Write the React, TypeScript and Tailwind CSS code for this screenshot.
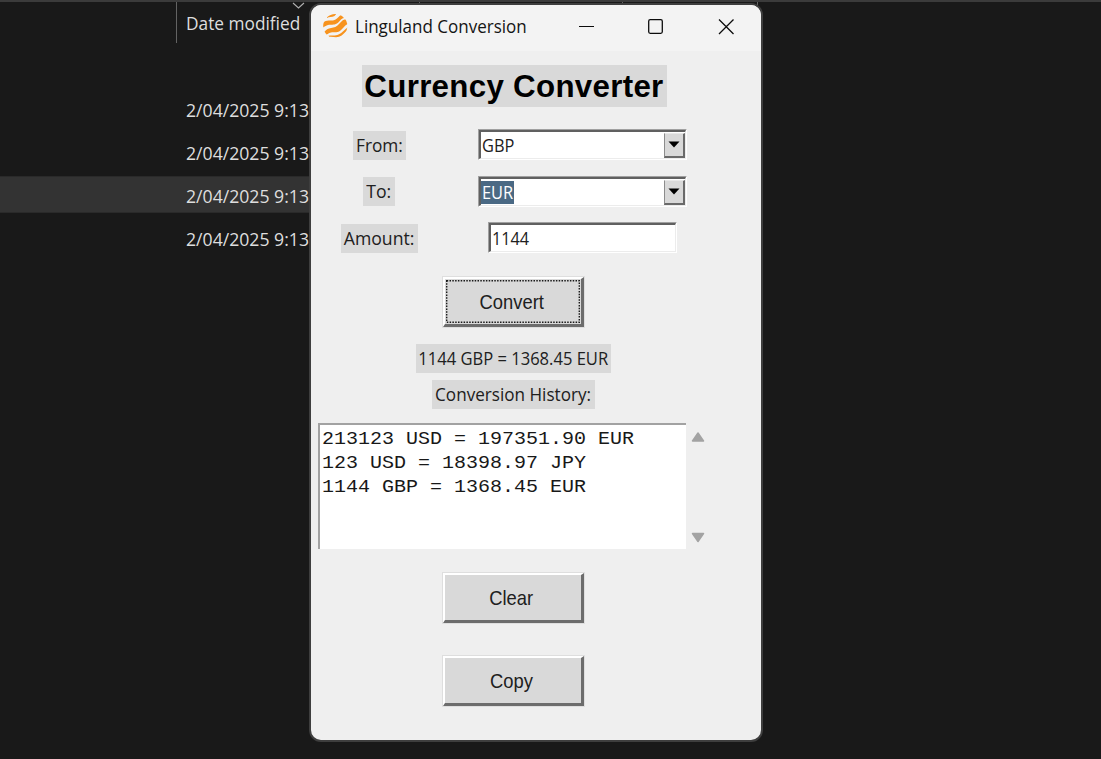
import type { ReactNode } from "react";

const rows = [
  { date: "2/04/2025 9:13", selected: false },
  { date: "2/04/2025 9:13", selected: false },
  { date: "2/04/2025 9:13", selected: true },
  { date: "2/04/2025 9:13", selected: false },
];

const history = ["213123 USD = 197351.90 EUR", "123 USD = 18398.97 JPY", "1144 GBP = 1368.45 EUR"];

function Explorer() {
  return (
    <div className="h-full w-full border-t-2 border-[#3b3b3b] font-['Open_Sans',sans-serif] text-[18px] text-[#dedede]">
      <div className="flex h-[41px]">
        <div className="w-[177px] border-r border-[#636363]" />
        <div className="relative w-[242px] pl-[9px]">
          <span className="inline-block origin-left scale-x-[0.96] whitespace-nowrap leading-[43px]">Date modified</span>
          <svg className="absolute left-[115px] top-0 h-[8px] w-[13px]" viewBox="0 0 13 8" fill="none" stroke="#b0b0b0" strokeWidth="1.1">
            <path d="M1 1L6.5 6L12 1" />
          </svg>
        </div>
        <div className="w-[203px] border-l border-[#636363]" />
        <div className="w-[136px] border-x border-[#636363]" />
      </div>
      <div className="h-[47px]" />
      {rows.map((row, i) => (
        <div key={i} className={`mb-[6px] flex h-[37px] w-[320px] items-center border-y pl-[186px] pt-[2px] ${row.selected ? "border-[#2a2a2a] bg-[#333333]" : "border-transparent"}`}>
          <span className="inline-block origin-left scale-x-[0.98] whitespace-nowrap leading-none">{row.date}</span>
        </div>
      ))}
    </div>
  );
}

function Logo() {
  return (
    <svg className="h-[25px] w-[25px]" viewBox="0 0 25 25">
      <defs>
        <clipPath id="globe">
          <circle cx="12.3" cy="12.1" r="12.1" />
        </clipPath>
      </defs>
      <g clipPath="url(#globe)" fill="#f7931e">
        <path d="M4 4C6 2.600 9 3.600 11.500 2C12.500 1.200 13 0 14 -1H4Z" />
        <path d="M-1 13V9.500C1 7.500 3.500 6.200 6.500 6.500C10 6.900 12 6.200 14.500 4C16 2.600 17 1.200 18.500 0.800L21 4C18.500 4 17.500 6.500 15 8.700C12 11.300 9 10.300 6 10.700C3.500 11 1.500 12.800 0 13.500Z" />
        <path d="M0 18.800C2 17.500 3.200 15.400 6 14.500C9 13.600 11.500 14.200 14.500 11.600C17.500 9 19 6.200 21.500 5.600H25V10C22.500 10.500 20.500 14 17.500 16.600C14.500 19.200 11 18 8 18.500C5.500 19 4.500 20.300 2.500 21Z" />
        <path d="M5.500 21.800C8.500 20.800 12 22.200 15.500 20.500C19.500 18.500 21.500 15.500 25 13.200V15.500C22 18 20 21.300 16 22.800C12.500 24 9.500 22.400 6 23Z" />
      </g>
    </svg>
  );
}

function TitleBar() {
  return (
    <div className="flex h-[46px] items-start bg-[#f3f3f3] pl-[12px] pt-[9px]">
      <Logo />
      <span className="ml-[7px] w-[215px] origin-left scale-x-[0.945] whitespace-nowrap font-['Open_Sans',sans-serif] text-[18px] leading-[25px] text-[#151515]">
        Linguland Conversion
      </span>
      <svg className="ml-[7px] mt-[3px] h-[20px] w-[160px]" viewBox="0 0 160 20" fill="none" stroke="#0c0c0c" strokeWidth="1.3">
        <path d="M2 9.5H17" strokeWidth="1" />
        <rect x="71.7" y="2.7" width="13.6" height="13.6" rx="1.5" />
        <path d="M142 2.5L156.500 17M156.500 2.500L142 17" />
      </svg>
    </div>
  );
}

function Tag({ className, textClass, children }: { className: string; textClass: string; children: ReactNode }) {
  return (
    <div className={`flex h-[29px] items-center justify-center bg-[#d9d9d9] pb-[2px] font-['Open_Sans',sans-serif] text-[18px] text-[#202020] ${className}`}>
      <span className={`inline-block whitespace-nowrap leading-none ${textClass}`}>{children}</span>
    </div>
  );
}

function Sunken({ className, children }: { className: string; children: ReactNode }) {
  return (
    <div className={`border border-b-white border-l-[#a0a0a0] border-r-white border-t-[#a0a0a0] ${className}`}>
      <div className="flex h-full w-full items-center border-b border-l-2 border-r border-t-2 border-b-[#ececec] border-l-[#606060] border-r-[#ececec] border-t-[#606060] bg-white font-['Open_Sans',sans-serif] text-[18px] leading-none text-[#202020]">
        {children}
      </div>
    </div>
  );
}

function Combo({ value, selected = false }: { value: string; selected?: boolean }) {
  return (
    <Sunken className="h-[31px] w-[209px]">
      <span className={`flex h-[23px] w-[33px] items-center pb-px ${selected ? "bg-[#4a6984] text-white" : ""}`}>
        <span className="origin-left translate-x-px scale-x-[0.91]">{value}</span>
      </span>
      <span className="ml-auto flex h-[25px] w-[21px] items-center justify-center border border-b-2 border-r-2 border-b-[#6a6a6a] border-l-[#8c8c8c] border-r-[#6a6a6a] border-t-[#e8e8e8] bg-[#d9d9d9]">
        <svg className="h-[7px] w-[12px]" viewBox="0 0 12 7">
          <path d="M0.500 0.500H11.500L6 6.500Z" fill="#000" />
        </svg>
      </span>
    </Sunken>
  );
}

function TkButton({ label, focused = false }: { label: string; focused?: boolean }) {
  return (
    <button className="block h-[52px] w-[143px] border border-[#dedede]">
      <span className="block h-full w-full border-b-[3px] border-l-2 border-r-[3px] border-t-2 border-b-[#6c6c6c] border-l-white border-r-[#6c6c6c] border-t-white bg-[#d9d9d9] p-px">
        <span className="relative flex h-full w-full items-center justify-center pr-[3px]">
          {focused && (
            <svg className="absolute inset-0 h-full w-full" fill="none" stroke="#1a1a1a" strokeWidth="1.4" strokeDasharray="1.500 1.300">
              <rect x="0.700" y="0.700" width="132.600" height="41.600" />
            </svg>
          )}
          <span className="inline-block scale-x-[0.875] whitespace-nowrap font-['Liberation_Sans',sans-serif] text-[21px] leading-none text-[#202020]">{label}</span>
        </span>
      </span>
    </button>
  );
}

function Converter() {
  return (
    <div className="absolute left-[309px] top-[3px] h-[739px] w-[454px] overflow-hidden rounded-[12px] border-2 border-[#3e3e3e] bg-[#efefef]">
      <TitleBar />
      <div className="flex flex-col pt-[14px]">
        <div className="ml-[51px] flex h-[42px] w-[305px] items-center justify-center bg-[#d9d9d9] pb-px pr-px">
          <h1 className="scale-x-[0.978] whitespace-nowrap font-['Liberation_Sans',sans-serif] text-[32px] font-bold leading-none tracking-[0.3px] text-black">Currency Converter</h1>
        </div>
        <div className="mt-[22px] flex h-[32px] items-start">
          <Tag className="ml-[42px] mt-[2px] w-[53px]" textClass="scale-x-[0.96]">From:</Tag>
          <div className="ml-[71px] pl-px"><Combo value="GBP" /></div>
        </div>
        <div className="mt-[15px] flex h-[32px] items-start">
          <Tag className="ml-[52px] mt-px w-[32px]" textClass="scale-x-[0.98]">To:</Tag>
          <div className="ml-[82px] pl-px"><Combo value="EUR" selected /></div>
        </div>
        <div className="mt-[14px] flex h-[32px] items-start">
          <Tag className="ml-[30px] mt-[2px] w-[77px]" textClass="scale-x-[0.98]">Amount:</Tag>
          <div className="ml-[70px]">
            <Sunken className="h-[31px] w-[189px]">
              <span className="ml-px inline-block origin-left scale-x-[0.9] pb-px">1144</span>
            </Sunken>
          </div>
        </div>
        <div className="ml-[131px] mt-[22px]"><TkButton label="Convert" focused /></div>
        <Tag className="ml-[105px] mt-[16px] w-[195px]" textClass="scale-x-[0.92]">1144 GBP = 1368.45 EUR</Tag>
        <Tag className="ml-[121px] mt-[7px] w-[163px]" textClass="scale-x-[0.95]">Conversion History:</Tag>
        <div className="ml-[7px] mt-[14px] flex h-[127px]">
          <div className="h-[126px] w-[368px] border-l-2 border-t-2 border-[#a2a2a2] bg-white pl-[2px] pt-[2px]">
            {history.map((line) => (
              <div key={line} className="h-[24px] w-[320px] origin-left scale-x-[1.111] whitespace-pre font-['Liberation_Mono',monospace] text-[18px] leading-[25px] text-[#181818]">{line}</div>
            ))}
          </div>
          <svg className="ml-[4px] h-[127px] w-[16px]" viewBox="0 0 16 127" fill="#a3a3a3" stroke="#a3a3a3" strokeWidth="1.500" strokeLinejoin="round">
            <path d="M2.500 18H13.500L8 10Z" />
            <path d="M2.500 110.500H13.500L8 118.500Z" />
          </svg>
        </div>
        <div className="ml-[131px] mt-[22px]"><TkButton label="Clear" /></div>
        <div className="ml-[131px] mt-[31px]"><TkButton label="Copy" /></div>
      </div>
    </div>
  );
}

export default function App() {
  return (
    <main className="relative h-[759px] w-[1101px] overflow-hidden bg-[#191919]">
      <Explorer />
      <Converter />
    </main>
  );
}
